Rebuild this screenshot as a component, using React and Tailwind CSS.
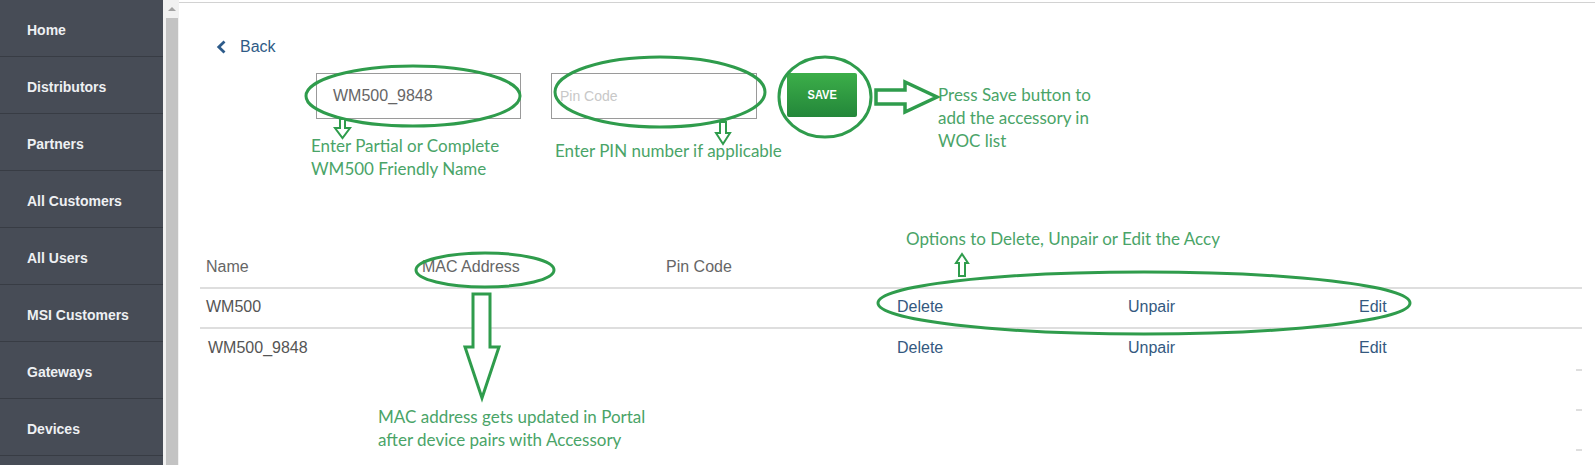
const navItems = [
  'Home',
  'Distributors',
  'Partners',
  'All Customers',
  'All Users',
  'MSI Customers',
  'Gateways',
  'Devices',
  '',
];

const accessories = [
  { name: 'WM500', mac: '', pin: '', indent: false },
  { name: 'WM500_9848', mac: '', pin: '', indent: true },
];

function Sidebar() {
  return (
    <div className="w-[163px] shrink-0 bg-[#474c56] flex flex-col">
      {navItems.map((item, i) => (
        <div
          key={i}
          className="h-[57px] shrink-0 flex items-center pl-[27px] pt-[4px] border-b border-[#383c44] text-[14px] font-bold text-[#eef0f3]"
        >
          {item}
        </div>
      ))}
    </div>
  );
}

function ScrollTrack() {
  return (
    <div className="w-[16px] shrink-0 bg-[#f1f1f1] flex flex-col">
      <div className="h-[18px] flex items-center justify-center pl-[2px]">
        <div className="w-0 h-0 border-l-[4px] border-r-[4px] border-b-[4px] border-l-transparent border-r-transparent border-b-[#a3a3a3]" />
      </div>
      <div className="flex-1 ml-[3px] mr-[1px] bg-[#c3c3c3]" />
    </div>
  );
}

function AccessoryTable() {
  return (
    <div className="mt-[128px] ml-[21px] mr-[13px]">
      {/* Header */}
      <div className="h-[42px] grid grid-cols-[216px_244px_231px_231px_231px_1fr] pl-[6px] items-center border-b-2 border-[#dedede] text-[16px] text-[#666]">
        <div>Name</div>
        <div>MAC Address</div>
        <div>Pin Code</div>
        <div />
      </div>
      {accessories.map((row, i) => (
        <div
          key={row.name}
          className={`h-[40px] grid grid-cols-[216px_244px_231px_231px_231px_1fr] pl-[6px] pb-[3px] items-center text-[16px] ${
            i === 0 ? 'border-b-2 border-[#dedede]' : ''
          }`}
        >
          <div className={`text-[#555] ${row.indent ? 'pl-[2px]' : ''}`}>{row.name}</div>
          <div className="text-[#555]">{row.mac}</div>
          <div className="text-[#555]">{row.pin}</div>
          <div className="text-[#34597f]">Delete</div>
          <div className="text-[#34597f]">Unpair</div>
          <div className="text-[#34597f]">Edit</div>
        </div>
      ))}
      {[0, 1, 2].map((n) => (
        <div key={n} className="h-[40px] flex items-start justify-end">
          <div className="w-[6px] h-[2px] bg-[#dedede]" />
        </div>
      ))}
    </div>
  );
}

function Annotations() {
  const green = '#2f9c4c';
  return (
    <div className="absolute inset-0 pointer-events-none font-['Lato','Open_Sans',sans-serif] text-[17px] leading-[23px] text-[#4aa468]">
      <svg className="absolute left-0 top-0" width="1595" height="465" viewBox="0 0 1595 465" fill="none">
        {/* name input */}
        <ellipse cx="413" cy="96" rx="107" ry="30" stroke={green} strokeWidth="3" />
        <polygon points="340,119 345,119 345,128 350,128 342.5,138 335,128 340,128" fill="white" stroke={green} strokeWidth="2" />
        {/* pin input */}
        <ellipse cx="660" cy="92" rx="105" ry="35" stroke={green} strokeWidth="3" />
        <polygon points="720,122 726,122 726,133 730,133 723,144 716,133 720,133" fill="white" stroke={green} strokeWidth="2" />
        {/* save */}
        <ellipse cx="825" cy="97" rx="46" ry="40" stroke={green} strokeWidth="3" />
        <polygon points="876,90 905,90 905,82 937,97 905,112 905,104 876,104" fill="white" stroke={green} strokeWidth="3.5" />
        {/* mac */}
        <ellipse cx="485" cy="270" rx="69" ry="17" stroke={green} strokeWidth="3" />
        <polygon points="473,294 490,294 490,347 499,347 482,398 465,347 473,347" fill="white" stroke={green} strokeWidth="3" />
        {/* options */}
        <polygon points="962,254 968,263 965,263 965,276 959,276 959,263 956,263" fill="white" stroke={green} strokeWidth="2" />
        <ellipse cx="1144" cy="303" rx="266" ry="31" stroke={green} strokeWidth="3" />
      </svg>
      <div className="absolute left-[311px] top-[134px]">
        Enter Partial or Complete
        <br />
        WM500 Friendly Name
      </div>
      <div className="absolute left-[555px] top-[139px]">Enter PIN number if applicable</div>
      <div className="absolute left-[938px] top-[83px]">
        Press Save button to
        <br />
        add the accessory in
        <br />
        WOC list
      </div>
      <div className="absolute left-[906px] top-[227px]">Options to Delete, Unpair or Edit the Accy</div>
      <div className="absolute left-[378px] top-[405px]">
        MAC address gets updated in Portal
        <br />
        after device pairs with Accessory
      </div>
    </div>
  );
}

export default function App() {
  return (
    <div className="relative flex w-[1595px] h-[465px] overflow-hidden bg-white font-['Liberation_Sans',Arial,sans-serif]">
      <Sidebar />
      <ScrollTrack />
      <div className="flex-1 flex flex-col mt-[2px] border-t border-[#d2d2d2]">
        {/* Back */}
        <div className="mt-[34px] ml-[37px] h-[20px] flex items-center gap-[13px] text-[16px] text-[#2f5b86]">
          <svg width="11" height="14" viewBox="0 0 11 14" fill="none">
            <path d="M8.5 1.5 L2.8 7 L8.5 12.5" stroke="#2d5b8a" strokeWidth="2.8" />
          </svg>
          <span>Back</span>
        </div>

        {/* Form */}
        <div className="mt-[16px] ml-[137px] flex items-start gap-[30px]">
          <div className="w-[205px] h-[46px] border border-[#9a9a9a] flex items-center pl-[16px] text-[16px] text-[#666]">
            WM500_9848
          </div>
          <input
            type="text"
            placeholder="Pin Code"
            className="w-[206px] h-[46px] border border-[#9a9a9a] px-[8px] text-[14px] text-[#666] placeholder-[#c8c8c8] outline-none"
          />
          <button className="w-[70px] h-[44px] rounded-[2px] bg-gradient-to-b from-[#3cae49] to-[#23873a] text-white text-[13px] font-bold">
            <span className="inline-block scale-x-[0.85]">SAVE</span>
          </button>
        </div>

        <AccessoryTable />
      </div>
      <Annotations />
    </div>
  );
}
